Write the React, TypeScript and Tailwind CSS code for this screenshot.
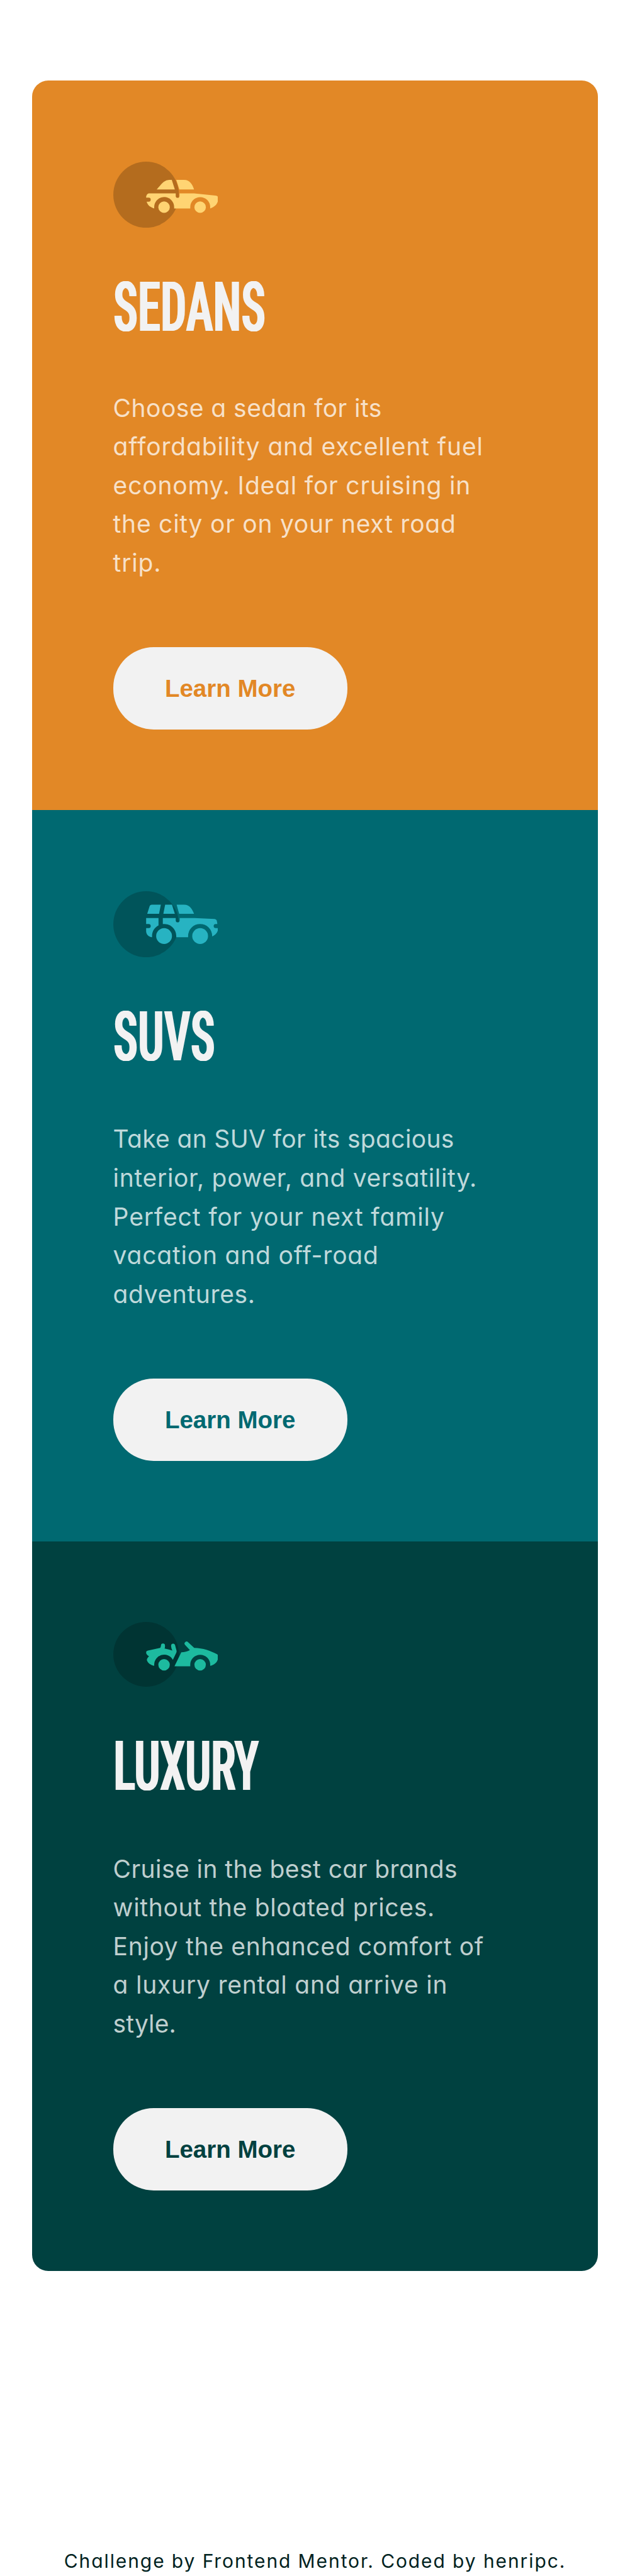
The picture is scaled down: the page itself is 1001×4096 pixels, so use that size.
import type { ReactNode } from "react";

type Line = { text: string; tracking: string };

type Car = {
  title: string;
  titleTracking: string;
  card: string;
  button: string;
  bodyGap: string;
  icon: ReactNode;
  lines: Line[];
};

function SedanIcon() {
  return (
    <svg viewBox="90 90 585 369" className="block h-[105.2px] w-[166.8px] shrink-0">
      <ellipse cx="273" cy="274.5" rx="183" ry="184.5" fill="#000" fillOpacity="0.2" />
      <g fill="#FFD473">
        <path d="M332 245C345 231 360 211 372 202Q386 192 402 192H416L433 245Z" />
        <path d="M441 192H484C517 192 531 218 540 245H458Z" />
        <path d="M290 267H438V281A10.5 11 0 0 0 459 281V267H540L660 279Q675 281 675 294C675 322 660 342 630 351V343A55.5 55 0 0 0 519 343V351H429V343A55.5 55.5 0 0 0 318 343V351C298 346 281 334 276 314H287A11.5 11.5 0 0 0 287 291H273C273 276 281 267 290 267Z" />
        <circle cx="373" cy="344" r="32" />
        <circle cx="574" cy="344" r="32" />
      </g>
    </svg>
  );
}

function SuvIcon() {
  return (
    <svg viewBox="90 78 585 369" className="block h-[105.2px] w-[166.8px] shrink-0">
      <ellipse cx="273" cy="262.5" rx="183" ry="184.5" fill="#000" fillOpacity="0.2" />
      <g fill="#27B3C2">
        <path d="M279 204L292 163Q295 153 305 153H355L345 204Z" />
        <path d="M379 153H417L433 204H369Z" />
        <path d="M443 153H484C517 153 531 180 540 204H457Z" />
        <path d="M273 228H342V269C320 280 306 302 306 328V335C288 334 273 320 273 302V284H287A11.5 11.5 0 0 0 287 261H273Z" />
        <path d="M366 228H438V241A11 11 0 0 0 460 241V228H543L655 233Q663 234 666 240Q669 250 670 261H661A11.5 11.5 0 0 0 661 284H675C675 305 660 323 641 331V328A67 67 0 0 0 507 328V335H441V328A67 67 0 0 0 366 261.5Z" />
        <circle cx="373" cy="328.5" r="44" />
        <circle cx="574" cy="328.5" r="44" />
      </g>
    </svg>
  );
}

function LuxuryIcon() {
  return (
    <svg viewBox="90 74 585 361" className="block h-[102.9px] w-[166.8px] shrink-0">
      <ellipse cx="273" cy="254.5" rx="183" ry="180.5" fill="#000" fillOpacity="0.2" />
      <g fill="#1DBA9F">
        <path d="M283 234L351 219Q355 215 356 205A11 11 0 0 1 378 205Q379 215 376 222Q400 226 419 234Q413 222 412 207A11.5 11.5 0 0 1 434 202L443 236Q443 241 441 246L422 285A55.5 55.5 0 0 0 318 312V319C298 314 281 303 277 286Q277 278 289 265Q273 256 273 245Q273 236 283 234Z" />
        <path d="M469 243Q496 243 517 231L490 202A11 11 0 0 1 507 187L541 219C592 220 630 235 668 254Q675 258 675 268C674 292 660 312 630 319V312A55.5 55 0 0 0 519 312V321H431Z" />
        <circle cx="373" cy="313" r="32" />
        <circle cx="574" cy="313" r="32" />
      </g>
    </svg>
  );
}

const cars: Car[] = [
  {
    title: "SEDANS",
    titleTracking: "tracking-[1px]",
    card: "h-[1160.2px] bg-[#E28826]",
    button: "text-[#E28826]",
    bodyGap: "mt-[74.1px]",
    icon: <SedanIcon />,
    lines: [
      { text: "Choose a sedan for its", tracking: "tracking-[0.45px]" },
      { text: "affordability and excellent fuel", tracking: "tracking-[0.85px]" },
      { text: "economy. Ideal for cruising in", tracking: "tracking-[0.8px]" },
      { text: "the city or on your next road", tracking: "tracking-[0.75px]" },
      { text: "trip.", tracking: "tracking-[0.8px]" },
    ],
  },
  {
    title: "SUVS",
    titleTracking: "tracking-[1.6px]",
    card: "h-[1162.7px] bg-[#006971]",
    button: "text-[#006971]",
    bodyGap: "mt-[76.8px]",
    icon: <SuvIcon />,
    lines: [
      { text: "Take an SUV for its spacious", tracking: "tracking-[0.33px]" },
      { text: "interior, power, and versatility.", tracking: "tracking-[0.68px]" },
      { text: "Perfect for your next family", tracking: "tracking-[0.85px]" },
      { text: "vacation and off-road", tracking: "tracking-[0.8px]" },
      { text: "adventures.", tracking: "tracking-[0.6px]" },
    ],
  },
  {
    title: "LUXURY",
    titleTracking: "tracking-[0.2px]",
    card: "h-[1160.2px] bg-[#004140]",
    button: "text-[#004140]",
    bodyGap: "mt-[76.6px]",
    icon: <LuxuryIcon />,
    lines: [
      { text: "Cruise in the best car brands", tracking: "tracking-[0.43px]" },
      { text: "without the bloated prices.", tracking: "tracking-[0.68px]" },
      { text: "Enjoy the enhanced comfort of", tracking: "tracking-[0.67px]" },
      { text: "a luxury rental and arrive in", tracking: "tracking-[0.77px]" },
      { text: "style.", tracking: "tracking-[0.1px]" },
    ],
  },
];

function CarCard({ car }: { car: Car }) {
  return (
    <section className={`flex flex-col items-start p-[128.3px] ${car.card}`}>
      {car.icon}
      <h2
        className={`mt-[72.1px] -ml-px origin-left scale-x-[0.655] font-['Roboto_Condensed','Roboto',sans-serif] text-[109.6px] leading-none font-medium text-[#F2F2F2] [text-shadow:1.5px_0_#F2F2F2,3px_0_#F2F2F2,4.5px_0_#F2F2F2] ${car.titleTracking}`}
      >
        {car.title}
      </h2>
      <p className={`font-['Inter',sans-serif] text-[39px] leading-[61.6px] font-[430] text-white/75 [font-feature-settings:'cv11'] ${car.bodyGap}`}>
        {car.lines.map((line) => (
          <span key={line.text} className={`block whitespace-nowrap ${line.tracking}`}>
            {line.text}
          </span>
        ))}
      </p>
      <button
        className={`mt-auto h-[130.9px] w-[372.2px] shrink-0 rounded-[64.2px] bg-[#F2F2F2] font-['Liberation_Sans',Arial,sans-serif] text-[38.5px] font-bold ${car.button}`}
      >
        Learn More
      </button>
    </section>
  );
}

export default function App() {
  return (
    <div className="flex h-[4096px] flex-col overflow-hidden bg-white px-[51.3px] pt-[128.3px]">
      <main className="shrink-0 overflow-hidden rounded-[25.7px]">
        {cars.map((car) => (
          <CarCard key={car.title} car={car} />
        ))}
      </main>
      <footer className="mt-[442.8px] text-center font-['Inter',sans-serif] text-[30px] leading-9 tracking-[1.9px] whitespace-nowrap text-[#002221] [font-feature-settings:'cv11']">
        Challenge by Frontend Mentor. Coded by henripc.
      </footer>
    </div>
  );
}
